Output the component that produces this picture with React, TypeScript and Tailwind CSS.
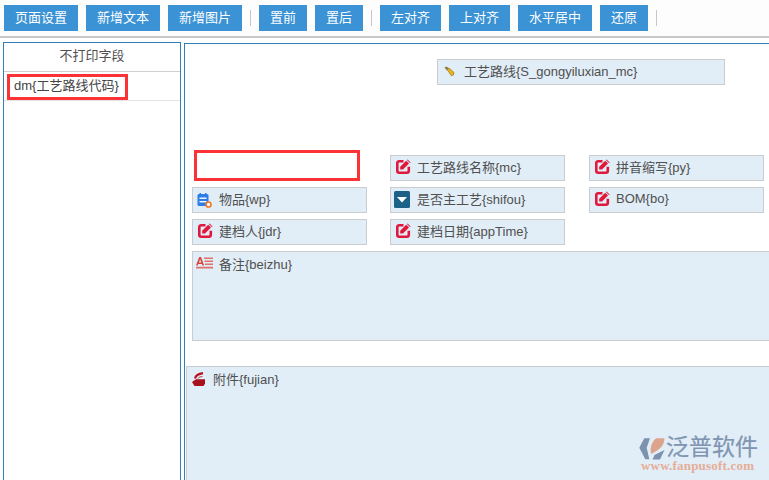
const fontStack = "font-['Liberation_Sans','Noto_Sans_CJK_SC',sans-serif]";

function EditIcon() {
  return (
    <svg width="15" height="15" viewBox="0 0 15 15" className="ml-[2px] shrink-0">
      <path d="M7.500 2.200H3.300A2 2 0 0 0 1.300 4.200V11.700A2 2 0 0 0 3.300 13.700H10.800A2 2 0 0 0 12.800 11.700V7.800" fill="none" stroke="#e0183c" strokeWidth="2.600" />
      <path d="M4.200 7.800 10.200 1.800 13 4.600 7 10.600H4.200Z" fill="#e0183c" />
      <path d="M11.600 0.400 14.600 3.400 13.900 4.100 10.900 1.100Z" fill="#e0183c" />
    </svg>
  );
}

function ListIcon() {
  return (
    <svg width="15" height="15" viewBox="0 0 15 15" className="ml-[1px] mt-[2px] shrink-0">
      <rect x="0.500" y="1" width="11" height="12" rx="1.500" fill="#2d7de8" />
      <rect x="2.500" y="0" width="1.500" height="2.500" fill="#2d7de8" />
      <rect x="8" y="0" width="1.500" height="2.500" fill="#2d7de8" />
      <rect x="2.500" y="4.500" width="7" height="1.400" fill="#fff" />
      <rect x="2.500" y="8" width="7" height="1.400" fill="#fff" />
      <circle cx="11.500" cy="11.500" r="2.500" fill="#fff" stroke="#f07a28" strokeWidth="1.700" />
    </svg>
  );
}

function SelectIcon() {
  return (
    <svg width="16" height="17" viewBox="0 0 16 17" className="shrink-0">
      <rect width="16" height="17" rx="1.500" fill="#1c6288" />
      <path d="M3 6h10L8 11.500Z" fill="#fff" />
    </svg>
  );
}

function NoteIcon() {
  return (
    <svg width="17" height="12" viewBox="0 0 17 12" className="shrink-0">
      <path d="M0 8.500 3.200 0H5l3.200 8.500H6.500L5.900 7H2.300L1.700 8.500ZM2.900 5.400H5.300L4.100 2.200Z" fill="#d8453f" />
      <path d="M8 0.500H17V2H8ZM8.500 3.500H17V5H8.500ZM9 6.500H17V8H9ZM0 9.800H17V11.500H0Z" fill="#e2716b" />
    </svg>
  );
}

function AttachIcon() {
  return (
    <svg width="13" height="15" viewBox="0 0 13 15" className="shrink-0">
      <path d="M0 11 4 8.200H13V12.500L11.500 15H2.500Z" fill="#a8101c" />
      <path d="M3 7.500C3.800 4.500 7 2.800 11 2.200" fill="none" stroke="#b8141f" strokeWidth="2.200" />
      <path d="M6 7.500C6.800 6.200 8.500 5.600 10.500 5.500" fill="none" stroke="#c8404a" strokeWidth="1" />
    </svg>
  );
}

function PencilIcon() {
  return (
    <svg width="12" height="12" viewBox="0 0 12 12" className="shrink-0">
      <path d="M0.500 1.500 2.500 0.500 5 2.500 3 4.500Z" fill="#8a7a50" />
      <path d="M3 3.500 5 2 10 6.500 9.500 9 7.500 9.800Z" fill="#e8b41c" stroke="#8a6a10" strokeWidth="0.600" />
    </svg>
  );
}

function Logo() {
  return (
    <div className="absolute left-[639px] top-[435px] w-[122px]">
      <div className="flex items-center">
        <svg width="26" height="24" viewBox="0 0 26 24" className="shrink-0">
          <path d="M5.300 2.300H11L7.700 11.700 10.300 23.300H6.300L0.300 11.700Z" fill="#7c92ae" />
          <path d="M17 2.300H25.500C25 11 20 14 12 18 11 12 12 7 17 2.300Z" fill="#dca48c" />
          <path d="M13.500 23.500 15.500 19 25.500 14 21 23.500Z" fill="#7c92ae" />
        </svg>
        <span className="ml-px text-[23px] leading-[25px] text-[#7f95b1] [-webkit-text-stroke:0.2px_#7f95b1]">泛普软件</span>
      </div>
      <div className="ml-[2px] whitespace-nowrap font-['Liberation_Serif',serif] text-[13px] leading-[11px] font-bold tracking-[0.2px] text-[#e5ae96]">
        www.fanpusoft.com
      </div>
    </div>
  );
}

function ToolButton({ label, width }: { label: string; width: string }) {
  return (
    <button className={`${width} h-[26px] bg-[#3b92d5] text-[13px] leading-[26px] text-white`}>
      {label}
    </button>
  );
}

function Separator() {
  return <span className="mx-[8px] h-[16px] w-px bg-[#c8c8c8]" />;
}

function Field({ icon, label, raised }: { icon?: React.ReactNode; label: string; raised?: boolean }) {
  return (
    <div className="flex h-[26px] w-[175px] items-center border border-[#c9cdd1] bg-[#e1edf7] pl-[3px] text-[13px] text-[#505050]">
      <span className="flex h-full w-[23px] shrink-0 items-start pt-[3px]">{icon}</span>
      <span className={raised ? "mb-[3px] whitespace-nowrap" : "whitespace-nowrap"}>{label}</span>
    </div>
  );
}

export default function App() {
  return (
    <div className={`relative h-[480px] w-[769px] overflow-hidden bg-white ${fontStack}`}>
      {/* Toolbar */}
      <div className="flex h-[38px] items-start border-b-2 border-[#c8c8c8] bg-[#fdfdfd] pl-[4px] pt-[5px]">
        <div className="flex items-center gap-[8px]">
          <ToolButton label="页面设置" width="w-[74px]" />
          <ToolButton label="新增文本" width="w-[74px]" />
          <ToolButton label="新增图片" width="w-[74px]" />
        </div>
        <div className="flex h-[26px] items-center"><Separator /></div>
        <div className="flex items-center gap-[8px]">
          <ToolButton label="置前" width="w-[48px]" />
          <ToolButton label="置后" width="w-[48px]" />
        </div>
        <div className="flex h-[26px] items-center"><Separator /></div>
        <div className="flex items-center gap-[8px]">
          <ToolButton label="左对齐" width="w-[61px]" />
          <ToolButton label="上对齐" width="w-[61px]" />
          <ToolButton label="水平居中" width="w-[74px]" />
          <ToolButton label="还原" width="w-[48px]" />
        </div>
        <div className="flex h-[26px] items-center"><Separator /></div>
      </div>

      <div className="flex gap-[3px] pl-[3px] pt-[4px]">
        {/* Fields not printed */}
        <aside className="h-[440px] w-[178px] shrink-0 border border-[#2f7fb9] text-[13px] text-[#505050]">
          <div className="h-[29px] border-b border-[#d0d0d0] text-center leading-[26px]">不打印字段</div>
          <div className="relative h-[29px] border-b border-[#e4e4e4] pl-[10px] leading-[28px] text-[#444]">
            dm{"{工艺路线代码}"}
            <span className="absolute left-[3px] top-[2px] h-[26px] w-[121px] border-[3px] border-[#fb3236]" />
          </div>
        </aside>

        {/* Print canvas */}
        <main className="mt-[1px] h-[440px] min-w-0 flex-1 border-l border-t border-[#2f7fb9]">
          <div className="ml-[252px] mt-[15px] w-[288px]">
            <div className="flex h-[26px] items-center border border-[#c9cdd1] bg-[#e1edf7] pl-[6px] text-[13px] text-[#505050]">
              <span className="flex w-[20px] shrink-0 justify-start"><PencilIcon /></span>
              <span className="whitespace-nowrap">工艺路线{"{S_gongyiluxian_mc}"}</span>
            </div>
          </div>

          <div className="ml-[7px] mt-[70px] grid grid-cols-[198px_199px_175px] gap-y-[6px]">
            <div className="relative h-[26px]">
              <span className="absolute left-[2px] top-[-5px] h-[31px] w-[166px] border-[3px] border-[#fb3236] bg-white" />
            </div>
            <Field icon={<EditIcon />} label="工艺路线名称{mc}" />
            <Field icon={<EditIcon />} label="拼音缩写{py}" />
            <Field icon={<ListIcon />} label="物品{wp}" />
            <Field icon={<SelectIcon />} label="是否主工艺{shifou}" />
            <Field icon={<EditIcon />} label="BOM{bo}" raised />
            <Field icon={<EditIcon />} label="建档人{jdr}" />
            <Field icon={<EditIcon />} label="建档日期{appTime}" />
          </div>

          <div className="ml-[7px] mt-[6px] flex h-[90px] w-[600px] items-start border border-[#c9cdd1] bg-[#e1edf7] pl-[3px] pt-[3px] text-[13px] text-[#505050]">
            <span className="flex w-[23px] pt-[2px]"><NoteIcon /></span>
            <span>备注{"{beizhu}"}</span>
          </div>

          <div className="ml-[1px] mt-[25px] flex h-[130px] w-[600px] items-start border border-[#c9cdd1] bg-[#e1edf7] pl-[5px] pt-[3px] text-[13px] text-[#505050]">
            <span className="flex w-[21px] pt-[1px]"><AttachIcon /></span>
            <span>附件{"{fujian}"}</span>
          </div>
        </main>
      </div>

      <Logo />
    </div>
  );
}
